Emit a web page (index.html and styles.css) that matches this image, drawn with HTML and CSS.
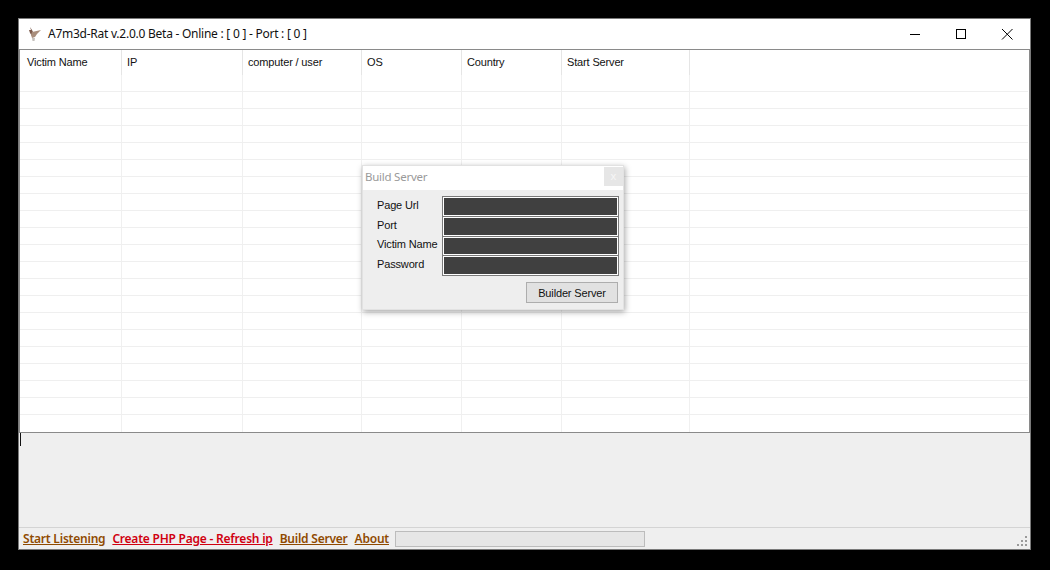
FILE: index.html
```html
<!DOCTYPE html>
<html lang="en">
<head>
<meta charset="utf-8">
<title>A7m3d-Rat</title>
<link rel="stylesheet" href="styles.css">
</head>
<body>
<div class="window">
  <header class="titlebar">
    <svg class="app-icon" width="16" height="16" viewBox="0 0 16 16"><path d="M3 1l2 3 1 2-1 4-2-3-1-3 2 0z" fill="#7d5a4c"/><path d="M5 6l9-2-4 4-2 3-3 1-1-3z" fill="#a98e7c"/><path d="M5 12h3l-.5 3H5.500z" fill="#c4c0bc"/></svg>
    <span class="title">A7m3d-Rat v.2.0.0 Beta - Online : [ 0 ] - Port : [ 0 ]</span>
    <div class="controls">
      <svg class="ctl" width="46" height="30" viewBox="0 0 46 30"><path d="M18 15.500h10" stroke="#000" fill="none"/></svg>
      <svg class="ctl" width="46" height="30" viewBox="0 0 46 30"><rect x="18.500" y="10.500" width="9" height="9" stroke="#000" fill="none"/></svg>
      <svg class="ctl" width="46" height="30" viewBox="0 0 46 30"><path d="M18 10l10.500 10.500M28.500 10L18 20.500" stroke="#000" fill="none"/></svg>
    </div>
  </header>
  <section class="list">
    <div class="row head">
      <div class="c c1">Victim Name</div><div class="c c2">IP</div><div class="c c3">computer / user</div><div class="c c4">OS</div><div class="c c5">Country</div><div class="c c6">Start Server</div><div class="c c7"></div>
    </div>
    <div class="row"><div class="c c1"></div><div class="c c2"></div><div class="c c3"></div><div class="c c4"></div><div class="c c5"></div><div class="c c6"></div><div class="c c7"></div></div>
    <div class="row"><div class="c c1"></div><div class="c c2"></div><div class="c c3"></div><div class="c c4"></div><div class="c c5"></div><div class="c c6"></div><div class="c c7"></div></div>
    <div class="row"><div class="c c1"></div><div class="c c2"></div><div class="c c3"></div><div class="c c4"></div><div class="c c5"></div><div class="c c6"></div><div class="c c7"></div></div>
    <div class="row"><div class="c c1"></div><div class="c c2"></div><div class="c c3"></div><div class="c c4"></div><div class="c c5"></div><div class="c c6"></div><div class="c c7"></div></div>
    <div class="row"><div class="c c1"></div><div class="c c2"></div><div class="c c3"></div><div class="c c4"></div><div class="c c5"></div><div class="c c6"></div><div class="c c7"></div></div>
    <div class="row"><div class="c c1"></div><div class="c c2"></div><div class="c c3"></div><div class="c c4"></div><div class="c c5"></div><div class="c c6"></div><div class="c c7"></div></div>
    <div class="row"><div class="c c1"></div><div class="c c2"></div><div class="c c3"></div><div class="c c4"></div><div class="c c5"></div><div class="c c6"></div><div class="c c7"></div></div>
    <div class="row"><div class="c c1"></div><div class="c c2"></div><div class="c c3"></div><div class="c c4"></div><div class="c c5"></div><div class="c c6"></div><div class="c c7"></div></div>
    <div class="row"><div class="c c1"></div><div class="c c2"></div><div class="c c3"></div><div class="c c4"></div><div class="c c5"></div><div class="c c6"></div><div class="c c7"></div></div>
    <div class="row"><div class="c c1"></div><div class="c c2"></div><div class="c c3"></div><div class="c c4"></div><div class="c c5"></div><div class="c c6"></div><div class="c c7"></div></div>
    <div class="row"><div class="c c1"></div><div class="c c2"></div><div class="c c3"></div><div class="c c4"></div><div class="c c5"></div><div class="c c6"></div><div class="c c7"></div></div>
    <div class="row"><div class="c c1"></div><div class="c c2"></div><div class="c c3"></div><div class="c c4"></div><div class="c c5"></div><div class="c c6"></div><div class="c c7"></div></div>
    <div class="row"><div class="c c1"></div><div class="c c2"></div><div class="c c3"></div><div class="c c4"></div><div class="c c5"></div><div class="c c6"></div><div class="c c7"></div></div>
    <div class="row"><div class="c c1"></div><div class="c c2"></div><div class="c c3"></div><div class="c c4"></div><div class="c c5"></div><div class="c c6"></div><div class="c c7"></div></div>
    <div class="row"><div class="c c1"></div><div class="c c2"></div><div class="c c3"></div><div class="c c4"></div><div class="c c5"></div><div class="c c6"></div><div class="c c7"></div></div>
    <div class="row"><div class="c c1"></div><div class="c c2"></div><div class="c c3"></div><div class="c c4"></div><div class="c c5"></div><div class="c c6"></div><div class="c c7"></div></div>
    <div class="row"><div class="c c1"></div><div class="c c2"></div><div class="c c3"></div><div class="c c4"></div><div class="c c5"></div><div class="c c6"></div><div class="c c7"></div></div>
    <div class="row"><div class="c c1"></div><div class="c c2"></div><div class="c c3"></div><div class="c c4"></div><div class="c c5"></div><div class="c c6"></div><div class="c c7"></div></div>
    <div class="row"><div class="c c1"></div><div class="c c2"></div><div class="c c3"></div><div class="c c4"></div><div class="c c5"></div><div class="c c6"></div><div class="c c7"></div></div>
    <div class="row"><div class="c c1"></div><div class="c c2"></div><div class="c c3"></div><div class="c c4"></div><div class="c c5"></div><div class="c c6"></div><div class="c c7"></div></div>
    <div class="row last"><div class="c c1"></div><div class="c c2"></div><div class="c c3"></div><div class="c c4"></div><div class="c c5"></div><div class="c c6"></div><div class="c c7"></div></div>
  </section>
  <section class="log"><div class="caret"></div></section>
  <footer class="status">
    <a class="link brown">Start Listening</a>
    <a class="link red">Create PHP Page - Refresh ip</a>
    <a class="link brown">Build Server</a>
    <a class="link brown">About</a>
    <div class="progress"></div>
    <svg class="grip" width="12" height="12" viewBox="0 0 12 12"><path d="M8 0h2v2H8zM4 4h2v2H4zM8 4h2v2H8zM0 8h2v2H0zM4 8h2v2H4zM8 8h2v2H8z" fill="#9a9a9a"/></svg>
  </footer>
  <div class="dialog">
    <div class="dlg-title"><span class="dlg-name">Build Server</span><span class="dlg-close">x</span></div>
    <div class="dlg-body">
      <div class="form">
        <div class="labels"><span>Page Url</span><span>Port</span><span>Victim Name</span><span>Password</span></div>
        <div class="fields"><div class="field"></div><div class="field"></div><div class="field"></div><div class="field"></div></div>
      </div>
      <div class="actions"><button class="btn">Builder Server</button></div>
    </div>
  </div>
</div>
</body>
</html>
```
FILE: styles.css
```css
* { box-sizing: border-box; }
html, body { margin: 0; height: 100%; }
body {
  width: 1050px;
  height: 570px;
  background: #000;
  padding: 18px 19px 20px 18px;
  overflow: hidden;
  font-family: "Noto Sans", sans-serif;
  font-size: 12px;
  color: #000;
}
.window {
  position: relative;
  height: 532px;
  border: 1px solid #7a7a7a;
  background: #efefef;
  display: flex;
  flex-direction: column;
}
.titlebar {
  height: 30px;
  background: #fff;
  display: flex;
  align-items: center;
  padding-left: 8px;
  flex: none;
}
.app-icon { margin-right: 5px; flex: none; }
.title { font-size: 12px; letter-spacing: -0.25px; color: #111; position: relative; top: -1px; }
.controls { margin-left: auto; display: flex; }
.ctl { display: block; }
.list {
  height: 384px;
  flex: none;
  background: #fff;
  border: 1px solid #8a8a8a;
  overflow: hidden;
  font-family: "Liberation Sans", sans-serif;
  font-size: 11px;
  letter-spacing: -0.15px;
}
.row {
  display: flex;
  height: 17px;
  border-bottom: 1px solid #efefef;
  padding-left: 2px;
  margin-right: 1px;
}
.row.head { height: 25px; border-bottom: 0; }
.row.last { border-bottom: 0; }
.c {
  border-right: 1px solid #f0f0f0;
  padding-left: 5px;
  flex: none;
}
.head .c { padding-top: 6px; color: #111; border-right-color: #e5e5e5; }
.c1 { width: 100px; }
.c2 { width: 121px; }
.c3 { width: 119px; }
.c4 { width: 100px; }
.c5 { width: 100px; }
.c6 { width: 128px; }
.c7 { flex: 1; border-right: 0; }
.log { flex: 1; padding-left: 1px; }
.caret { width: 1px; height: 13px; background: #111; }
.status {
  height: 22px;
  flex: none;
  border-top: 1px solid #d4d4d4;
  display: flex;
  align-items: center;
  padding-left: 4px;
  gap: 7px;
  position: relative;
}
.link {
  font-family: "Noto Sans", sans-serif;
  font-size: 12px;
  font-weight: 600;
  letter-spacing: -0.22px;
  text-decoration: underline;
}
.brown { color: #8f4a00; }
.red { color: #d0000f; }
.progress {
  width: 250px;
  height: 16px;
  margin-left: -1px;
  border: 1px solid #bcbcbc;
  background: #e6e6e6;
}
.grip { position: absolute; right: 1px; bottom: 1px; }
.dialog {
  position: absolute;
  left: 343px;
  top: 146px;
  width: 262px;
  height: 145px;
  background: #eee;
  border: 1px solid #e2e2e2;
  box-shadow: 1px 2px 6px rgba(0,0,0,.35);
  display: flex;
  flex-direction: column;
}
.dlg-title {
  height: 24px;
  background: #fff;
  display: flex;
  align-items: flex-start;
  justify-content: space-between;
  padding-left: 2px;
  flex: none;
}
.dlg-name { color: #9a9a9a; font-size: 11.500px; letter-spacing: -0.25px; line-height: 22px; }
.dlg-close {
  width: 19px;
  height: 19px;
  margin: 1px 0 0 0;
  background: #e6e6e6;
  color: #f6f6f6;
  font-size: 11px;
  text-align: center;
  line-height: 18px;
}
.dlg-body { flex: 1; padding: 6px 4px 0 14px; display: flex; flex-direction: column; }
.form { display: flex; justify-content: space-between; }
.labels {
  display: flex;
  flex-direction: column;
  white-space: nowrap;
  font-family: "Liberation Sans", sans-serif;
  font-size: 11px;
  letter-spacing: -0.15px;
  line-height: 19.700px;
  color: #111;
}
.fields {
  width: 177px;
  flex: none;
  border: 1px solid #7a7a7a;
  background: #7a7a7a;
  display: flex;
  flex-direction: column;
  gap: 1px;
}
.field {
  height: 18.750px;
  background: #404040;
  border: 1px solid #fff;
}
.actions { display: flex; justify-content: flex-end; margin: 6px 1px 0 0; }
.btn {
  width: 92px;
  height: 21px;
  padding: 0;
  background: #e1e1e1;
  border: 1px solid #adadad;
  font-family: "Liberation Sans", sans-serif;
  font-size: 11px;
  letter-spacing: -0.15px;
  color: #111;
}
```
